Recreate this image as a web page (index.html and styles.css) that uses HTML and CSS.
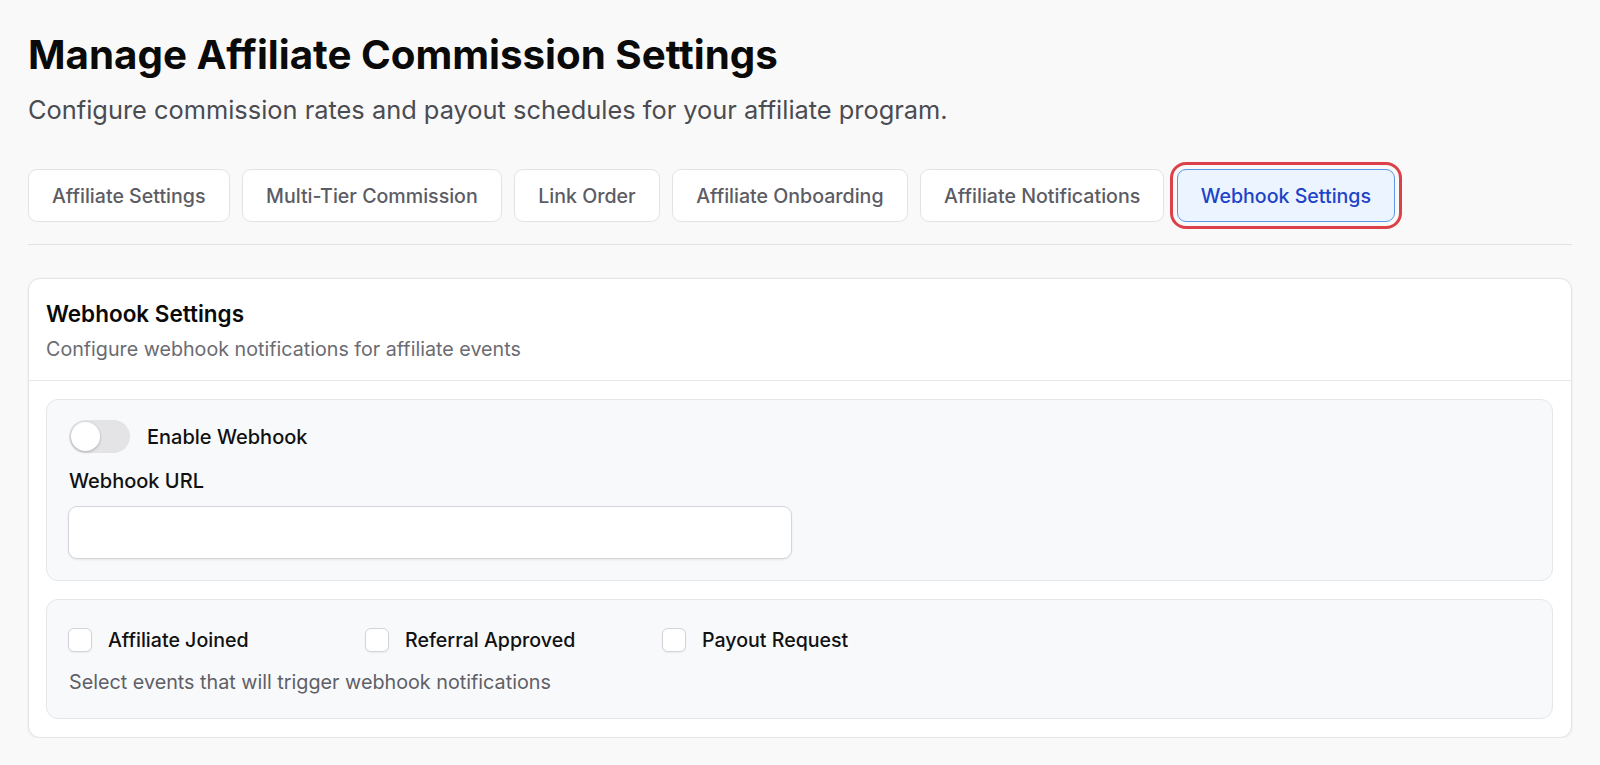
FILE: index.html
```html
<!DOCTYPE html>
<html lang="en">
<head>
<meta charset="utf-8">
<title>Manage Affiliate Commission Settings</title>
<link rel="stylesheet" href="styles.css">
</head>
<body>
<main class="page">
  <h1 class="page-title">Manage Affiliate Commission Settings</h1>
  <p class="page-subtitle">Configure commission rates and payout schedules for your affiliate program.</p>

  <nav class="tabs">
    <button class="tab">Affiliate Settings</button>
    <button class="tab">Multi-Tier Commission</button>
    <button class="tab">Link Order</button>
    <button class="tab">Affiliate Onboarding</button>
    <button class="tab">Affiliate Notifications</button>
    <button class="tab tab-active">Webhook Settings</button>
  </nav>

  <section class="card">
    <header class="card-header">
      <h2 class="card-title">Webhook Settings</h2>
      <p class="card-desc">Configure webhook notifications for affiliate events</p>
    </header>
    <div class="card-body">
      <div class="panel panel-url">
        <div class="toggle-row">
          <span class="toggle"><span class="knob"></span></span>
          <span class="toggle-label">Enable Webhook</span>
        </div>
        <label class="field-label">Webhook URL</label>
        <div class="input"></div>
      </div>
      <div class="panel panel-events">
        <div class="events">
          <div class="event"><span class="checkbox"></span><span class="event-label">Affiliate Joined</span></div>
          <div class="event"><span class="checkbox"></span><span class="event-label">Referral Approved</span></div>
          <div class="event"><span class="checkbox"></span><span class="event-label">Payout Request</span></div>
        </div>
        <p class="help">Select events that will trigger webhook notifications</p>
      </div>
    </div>
  </section>
</main>
</body>
</html>
```

FILE: styles.css
```css
* { box-sizing: border-box; }
html, body { margin: 0; padding: 0; }
body {
  background: #f9f9f9;
  font-family: Inter, "Noto Sans", "Liberation Sans", sans-serif;
  color: #111;
}
.page {
  padding: 31px 28px 0 28px;
}
.page-title {
  margin: 0;
  font-size: 40.3px;
  line-height: 48px;
  font-weight: 700;
  letter-spacing: 0;
  color: #0a0a0a;
}
.page-subtitle {
  margin: 16px 0 0 0;
  font-size: 25.4px;
  line-height: 30px;
  color: #4b4b52;
}
.tabs {
  display: flex;
  gap: 12.5px;
  margin-top: 44px;
  padding-bottom: 22px;
  border-bottom: 1px solid #e2e2e4;
}
.tab {
  height: 53px;
  padding: 0 23px;
  background: #fff;
  border: 1px solid #e3e3e6;
  border-radius: 9px;
  font-family: inherit;
  font-size: 19.6px;
  font-weight: 500;
  color: #5c5c64;
  cursor: pointer;
}
.tab-active {
  background: #ecf4ff;
  border-color: #5d97ea;
  color: #1d44c8;
  outline: 3.5px solid #dc4048;
  outline-offset: 4px;
}
.card {
  margin-top: 33px;
  background: #fff;
  border: 1px solid #e4e4e7;
  border-radius: 12px;
  box-shadow: 0 1px 3px rgba(0,0,0,0.06);
}
.card-header {
  padding: 21px 17px 19px 17px;
  border-bottom: 1px solid #e6e6e8;
}
.card-title {
  margin: 0;
  font-size: 22.5px;
  line-height: 28px;
  font-weight: 600;
  color: #0a0a0a;
}
.card-desc {
  margin: 9px 0 0 0;
  font-size: 19.7px;
  line-height: 24px;
  color: #6b6b72;
}
.card-body {
  padding: 18px 18px 18px 17px;
  display: flex;
  flex-direction: column;
  gap: 18px;
}
.panel {
  background: #f8f9fb;
  border: 1px solid #e4e6ea;
  border-radius: 12px;
  padding: 20px 22px 21px 21px;
}
.toggle-row {
  display: flex;
  align-items: center;
  gap: 17px;
  height: 33px;
}
.toggle {
  margin-left: 1px;
  width: 61px;
  height: 33px;
  border-radius: 17px;
  background: #e4e4e7;
  display: flex;
  align-items: center;
  padding: 2px;
}
.knob {
  width: 29px;
  height: 29px;
  border-radius: 50%;
  background: #fff;
  box-shadow: 0 1px 3px rgba(0,0,0,0.25);
}
.toggle-label {
  font-size: 20px;
  font-weight: 500;
  color: #111;
}
.field-label {
  display: block;
  margin-top: 16px;
  margin-left: 1px;
  font-size: 20px;
  line-height: 24px;
  font-weight: 500;
  color: #111;
}
.input {
  margin-top: 13px;
  width: 724px;
  height: 53px;
  background: #fff;
  border: 1px solid #d6d6da;
  border-radius: 9px;
  box-shadow: 0 1px 2px rgba(0,0,0,0.08);
}
.panel-events {
  padding: 26px 22px 24px 21px;
}
.events {
  display: flex;
  height: 28px;
  align-items: center;
}
.event {
  width: 297px;
  display: flex;
  align-items: center;
  gap: 16px;
}
.checkbox {
  width: 24px;
  height: 24px;
  border: 1px solid #d4d4d8;
  border-radius: 6px;
  background: #fff;
  box-shadow: 0 1px 2px rgba(0,0,0,0.06);
}
.event-label {
  font-size: 19.6px;
  font-weight: 500;
  color: #111;
}
.help {
  margin: 16px 0 0 0;
  margin-left: 1px;
  font-size: 19.75px;
  line-height: 24px;
  color: #5f5f66;
}
```
